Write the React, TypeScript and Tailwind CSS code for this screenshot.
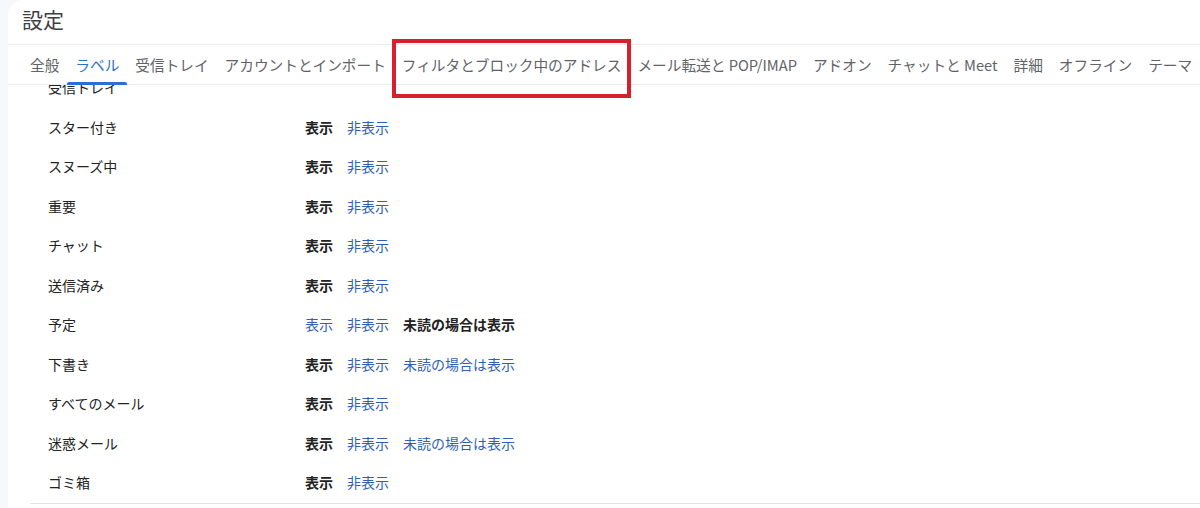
import type { ReactNode } from "react";

const tabs = [
  "全般",
  "ラベル",
  "受信トレイ",
  "アカウントとインポート",
  "フィルタとブロック中のアドレス",
  "メール転送と POP/IMAP",
  "アドオン",
  "チャットと Meet",
  "詳細",
  "オフライン",
  "テーマ",
];

type Choice = "show" | "hide" | "unread";

interface LabelRow {
  name: string;
  selected?: Choice;
  unread?: boolean;
}

// inbox can't be hidden, so it has no options
const systemLabels: LabelRow[] = [
  { name: "受信トレイ" },
  { name: "スター付き", selected: "show" },
  { name: "スヌーズ中", selected: "show" },
  { name: "重要", selected: "show" },
  { name: "チャット", selected: "show" },
  { name: "送信済み", selected: "show" },
  { name: "予定", selected: "unread", unread: true },
  { name: "下書き", selected: "show", unread: true },
  { name: "すべてのメール", selected: "show" },
  { name: "迷惑メール", selected: "show", unread: true },
  { name: "ゴミ箱", selected: "show" },
];

const Option = ({ active, children }: { active: boolean; children: ReactNode }) => (
  <span className={active ? "font-bold text-[#222]" : "cursor-pointer text-[#2f5fb3]"}>
    {children}
  </span>
);

export default function App() {
  return (
    <div
      className="relative h-[508px] w-[1200px] overflow-hidden bg-[#f6f8fc] pl-[8px]"
      style={{ fontFamily: '"Noto Sans CJK JP", "Noto Sans", sans-serif' }}
    >
      <div className="flex h-full flex-col rounded-tl-[16px] bg-white">
        <h1 className="h-[44px] pl-[14px] pt-[4px] text-[21px] leading-[30px] text-[#3c4043]">設定</h1>

        <nav className="flex h-[41px] shrink-0 items-center border-y border-[#ececec] pl-[14px]">
          {tabs.map((tab) => {
            const active = tab === "ラベル";
            return (
              <div
                key={tab}
                className={`relative flex h-full items-center whitespace-nowrap px-[8px] text-[14.66px] ${
                  active ? "text-[#2a6fd6]" : "text-[#5f6368]"
                }`}
              >
                {tab}
                {active && (
                  <span className="absolute bottom-[-1px] left-0 right-0 h-[3px] rounded-t-[2px] bg-[#2a6fd6]" />
                )}
              </div>
            );
          })}
        </nav>

        <div className="flex-1 overflow-hidden">
          <div className="-mt-[17px] ml-[22px] border-b border-[#e3e3e3]">
            {systemLabels.map((row) => (
              <div key={row.name} className="flex h-[39.5px] items-center pl-[18px] text-[14px]">
                <div className="w-[257px] text-[#222]">{row.name}</div>
                {row.selected && (
                  <div className="flex gap-[14px]">
                    <Option active={row.selected === "show"}>表示</Option>
                    <Option active={row.selected === "hide"}>非表示</Option>
                    {row.unread && (
                      <Option active={row.selected === "unread"}>未読の場合は表示</Option>
                    )}
                  </div>
                )}
              </div>
            ))}
          </div>
        </div>
      </div>

      {/* highlight around the filters tab */}
      <div className="pointer-events-none absolute left-[392px] top-[39px] h-[59px] w-[239px] border-[4px] border-[#d7202c]" />
    </div>
  );
}
